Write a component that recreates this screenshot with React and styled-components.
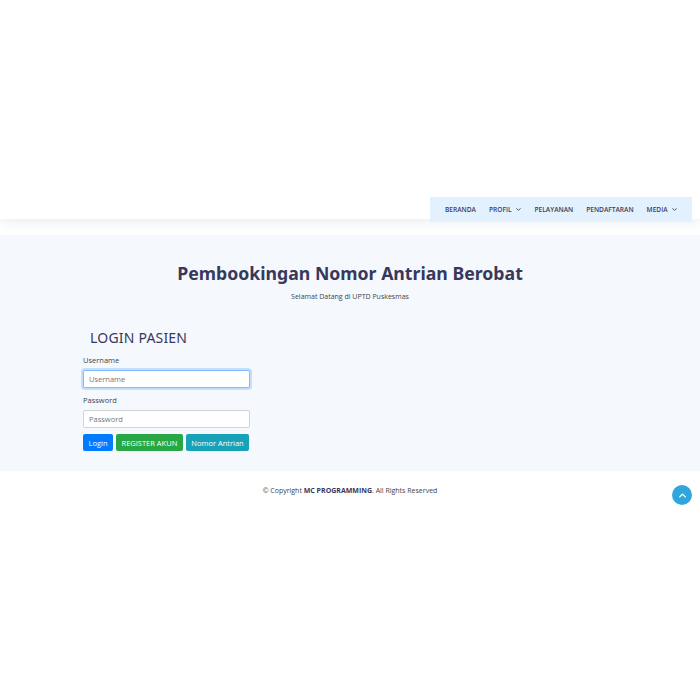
import styled, { createGlobalStyle } from "styled-components";
import { ChevronDown, ChevronUp } from "lucide-react";

const GlobalStyle = createGlobalStyle`
  body {
    margin: 0;
    background: #fff;
    font-family: "Open Sans", "Noto Sans", sans-serif;
    color: #444;
  }
`;

const Header = styled.header`
  height: 219px;
  background: #fff;
  box-shadow: 0 2px 12px rgba(55, 81, 126, 0.12);
  display: flex;
  justify-content: flex-end;
  align-items: flex-end;
  padding-right: 8px;
  position: relative;
  z-index: 2;
`;

const Nav = styled.nav`
  display: flex;
  align-items: center;
  gap: 13px;
  height: 25px;
  width: 262px;
  box-sizing: border-box;
  margin-bottom: -3px;
  padding: 0 0 0 15px;
  background: #e3f0fd;
`;

const NavItem = styled.a`
  display: flex;
  align-items: center;
  gap: 3px;
  font-size: 6.6px;
  font-weight: 600;
  color: #3b3d5a;
  text-transform: uppercase;
  text-decoration: none;
  white-space: nowrap;
`;

const Section = styled.section`
  margin-top: 16px;
  background: #f5f8fd;
  padding: 26px 0 18px;
`;

const Title = styled.h2`
  margin: 0;
  text-align: center;
  font-family: "Noto Sans", sans-serif;
  font-size: 17.7px;
  font-weight: 700;
  color: #37385c;
`;

const Subtitle = styled.p`
  margin: 7px 0 0;
  text-align: center;
  font-size: 7px;
  color: #444;
`;

const LoginBox = styled.div`
  width: 167px;
  margin: 27px 0 0 83px;
  display: flex;
  flex-direction: column;
`;

const LoginTitle = styled.h3`
  margin: 0 0 8px 7px;
  font-family: "Noto Sans", sans-serif;
  font-size: 14px;
  font-weight: 400;
  letter-spacing: 0.2px;
  color: #37385c;
`;

const Label = styled.label`
  font-size: 7.5px;
  color: #444;
  margin-bottom: 5px;
`;

const Input = styled.input`
  box-sizing: border-box;
  width: 167px;
  height: 18px;
  padding: 0 5px;
  font-family: "Open Sans", sans-serif;
  font-size: 7.5px;
  color: #444;
  background: #fff;
  border: 1px solid ${(p) => (p.$focus ? "#80bdff" : "#ced4da")};
  border-radius: 2px;
  box-shadow: ${(p) => (p.$focus ? "0 0 0 2px rgba(0,123,255,0.2)" : "none")};
  margin-bottom: 7px;
  outline: none;
  &::placeholder {
    color: #777;
  }
`;

const BtnRow = styled.div`
  display: flex;
  gap: 3px;
  margin-top: -1px;
  margin-bottom: 2px;
`;

const Btn = styled.button`
  height: 17px;
  padding: 0 5.5px;
  border: none;
  border-radius: 2px;
  font-family: "Open Sans", sans-serif;
  font-size: 7.5px;
  white-space: nowrap;
  color: #fff;
  background: ${(p) => p.$bg};
  cursor: pointer;
`;

const Footer = styled.footer`
  padding: 15px 0;
  text-align: center;
  font-size: 7px;
  color: #444;
  position: relative;

  strong {
    color: #37385c;
    font-weight: 700;
  }
`;

const BackTop = styled.a`
  position: absolute;
  right: 8px;
  top: 14px;
  width: 20px;
  height: 20px;
  border-radius: 50%;
  background: #2fa7dd;
  display: flex;
  align-items: center;
  justify-content: center;
  color: #fff;
`;

const App = () => {
  return (
    <>
      <GlobalStyle />
      <Header>
        <Nav>
          <NavItem>Beranda</NavItem>
          <NavItem>
            Profil <ChevronDown size={7} strokeWidth={3} />
          </NavItem>
          <NavItem>Pelayanan</NavItem>
          <NavItem>Pendaftaran</NavItem>
          <NavItem>
            Media <ChevronDown size={7} strokeWidth={3} />
          </NavItem>
        </Nav>
      </Header>
      <Section>
        <Title>Pembookingan Nomor Antrian Berobat</Title>
        <Subtitle>Selamat Datang di UPTD Puskesmas</Subtitle>
        <LoginBox>
          <LoginTitle>LOGIN PASIEN</LoginTitle>
          <Label>Username</Label>
          <Input $focus placeholder="Username" />
          <Label>Password</Label>
          <Input type="password" placeholder="Password" />
          <BtnRow>
            <Btn $bg="#007bff">Login</Btn>
            <Btn $bg="#28a745">REGISTER AKUN</Btn>
            <Btn $bg="#17a2b8">Nomor Antrian</Btn>
          </BtnRow>
        </LoginBox>
      </Section>
      <Footer>
        © Copyright <strong>MC PROGRAMMING</strong>. All Rights Reserved
        <BackTop>
          <ChevronUp size={11} strokeWidth={3} />
        </BackTop>
      </Footer>
    </>
  );
};

export default App;
